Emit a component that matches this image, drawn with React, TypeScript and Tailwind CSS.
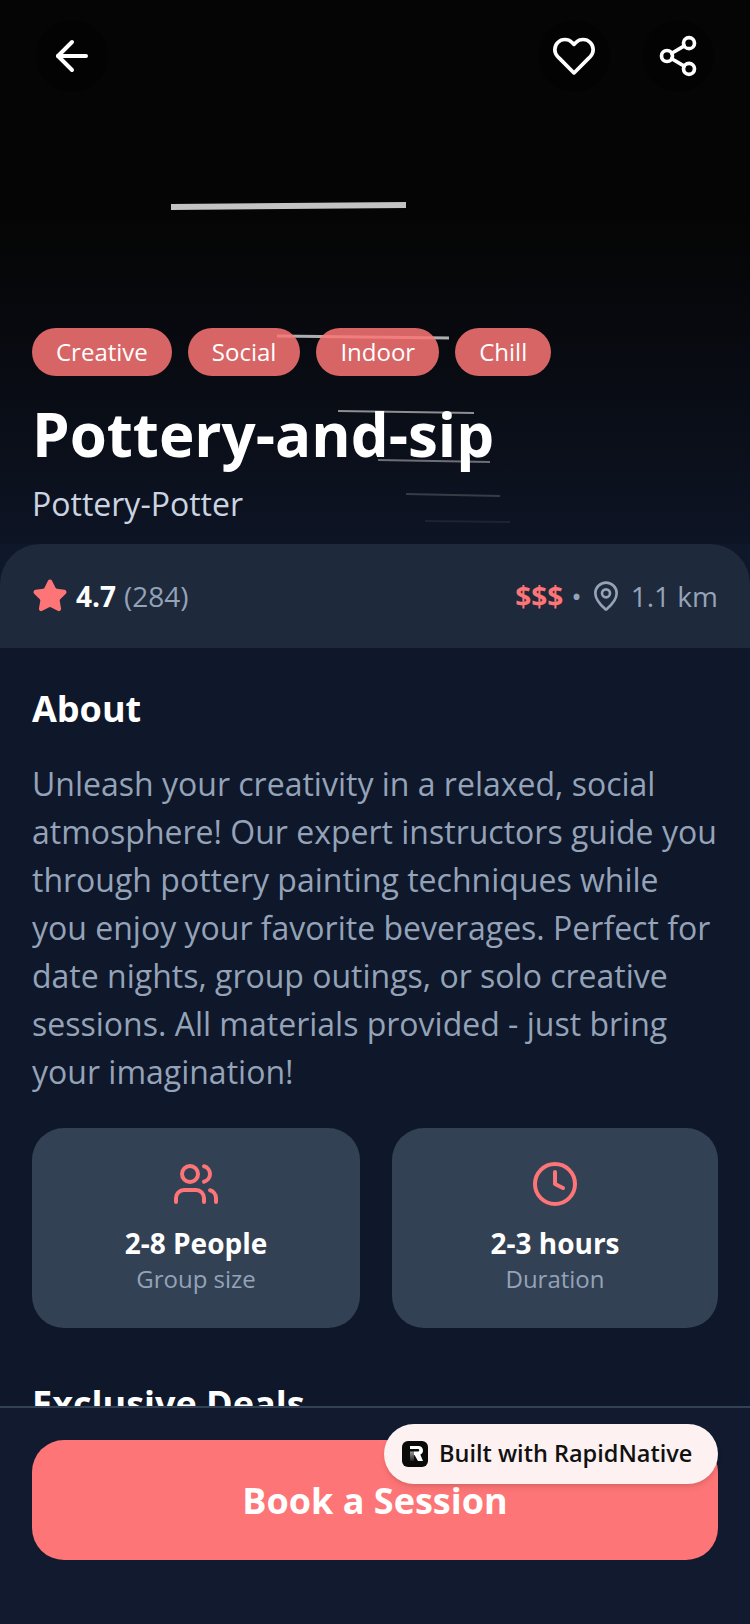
import { ArrowLeft, Clock, MapPin, Share2, Star, Users } from "lucide-react";

const tags = ["Creative", "Social", "Indoor", "Chill"];

const streaks = [
  { x1: 171, y1: 207, x2: 406, y2: 205, w: 6, o: 0.85 },
  { x1: 277, y1: 336, x2: 449, y2: 338, w: 3, o: 0.75 },
  { x1: 338, y1: 411, x2: 474, y2: 413, w: 2, o: 0.6 },
  { x1: 378, y1: 460, x2: 490, y2: 462, w: 2, o: 0.45 },
  { x1: 406, y1: 494, x2: 500, y2: 496, w: 2, o: 0.2 },
  { x1: 425, y1: 521, x2: 510, y2: 522, w: 2, o: 0.08 },
];

const RoundButton = ({ children }: { children: React.ReactNode }) => (
  <button className="flex h-[72px] w-[72px] items-center justify-center rounded-full bg-black/30 text-white">
    {children}
  </button>
);

const InfoCard = ({ icon, title, sub, className }: { icon: React.ReactNode; title: string; sub: string; className: string }) => (
  <div className={`flex h-[200px] flex-col items-center rounded-[32px] bg-[#334155] pt-8 ${className}`}>
    {icon}
    <p className="mt-[17px] text-[28px] leading-[36px] font-bold text-white">{title}</p>
    <p className="text-[24px] leading-[36px] text-[#94a3b8]">{sub}</p>
  </div>
);

export default function App() {
  return (
    <div className="flex h-[1624px] w-[750px] flex-col overflow-hidden bg-[#0f172a] font-['Open_Sans',sans-serif]">
      <div className="flex-1 overflow-hidden">
        <section className="relative flex h-[544px] flex-col bg-gradient-to-b from-[#050505] from-40% to-[#0d1424]">
          {/* streaks from the hero photo */}
          <svg className="absolute inset-0" width="750" height="544" viewBox="0 0 750 544" fill="none">
            {streaks.map((s) => (
              <line key={s.x1} x1={s.x1} y1={s.y1} x2={s.x2} y2={s.y2} stroke="#e5e5e5" strokeWidth={s.w} strokeOpacity={s.o} />
            ))}
          </svg>

          <div className="relative flex items-center justify-between px-9 pt-5">
            <RoundButton><ArrowLeft size={48} strokeWidth={2} /></RoundButton>
            <div className="flex gap-8">
              <RoundButton>
                <svg width="44" height="44" viewBox="0 0 24 24" fill="none" stroke="currentColor" strokeWidth="2" strokeLinecap="round" strokeLinejoin="round">
                  <path d="M20.84 4.61a5.5 5.5 0 0 0-7.78 0L12 5.67l-1.06-1.06a5.5 5.5 0 0 0-7.78 7.78l1.06 1.06L12 21.23l7.78-7.78 1.06-1.06a5.5 5.5 0 0 0 0-7.78z" />
                </svg>
              </RoundButton>
              <RoundButton><Share2 size={44} strokeWidth={2} /></RoundButton>
            </div>
          </div>

          <div className="relative mt-[236px] flex gap-4 px-8">
            {tags.map((tag) => (
              <span key={tag} className="flex h-12 items-center rounded-full bg-[#fd7576]/85 px-6 text-[24px] text-white">
                {tag}
              </span>
            ))}
          </div>
          <h1 className="relative mt-[24px] px-8 text-[60px] leading-[68px] font-bold text-white">Pottery-and-sip</h1>
          <p className="relative mt-[14px] px-8 text-[32px] leading-[44px] text-[#cbd5e1]">Pottery-Potter</p>
        </section>

        <section className="flex h-[104px] items-center justify-between rounded-t-[40px] bg-[#1e293b] px-8">
          <div className="flex items-center">
            <Star size={36} className="fill-[#fd7576] text-[#fd7576]" />
            <span className="ml-2 text-[28px] font-bold text-white">4.7</span>
            <span className="ml-2 text-[28px] text-[#94a3b8]">(284)</span>
          </div>
          <div className="flex items-center">
            <span className="text-[28px] font-bold text-[#fd7576]">$$$</span>
            <span className="mx-2 text-[28px] text-[#94a3b8]">•</span>
            <MapPin size={32} strokeWidth={2} className="text-[#94a3b8]" />
            <span className="ml-[9px] text-[28px] text-[#94a3b8]">1.1 km</span>
          </div>
        </section>

        <section className="px-8 pt-[33px]">
          <h2 className="text-[36px] leading-[56px] font-bold text-white">About</h2>
          <p className="mt-[23px] text-[32px] leading-[48px] text-[#94a3b8]">
            Unleash your creativity in a relaxed, social atmosphere! Our expert instructors guide you through pottery painting techniques while you enjoy your favorite beverages. Perfect for date nights, group outings, or solo creative sessions. All materials provided - just bring your imagination!
          </p>
          <div className="mt-[32px] flex gap-8">
            <InfoCard className="w-[328px]" icon={<Users size={48} className="text-[#fd7576]" />} title="2-8 People" sub="Group size" />
            <InfoCard className="flex-1" icon={<Clock size={48} className="text-[#fd7576]" />} title="2-3 hours" sub="Duration" />
          </div>
          <h2 className="mt-[48px] text-[36px] leading-[56px] font-bold text-white">Exclusive Deals</h2>
        </section>
      </div>

      <footer className="relative h-[218px] shrink-0 border-t-2 border-[#334155] bg-[#111a2e] px-8 pt-8">
        <button className="flex h-[120px] w-full items-center justify-center rounded-[32px] bg-[#fd7576] pt-[2px] text-[36px] font-bold text-white">
          Book a Session
        </button>
        <div className="absolute top-4 right-8 flex h-[60px] w-[334px] items-center gap-[11px] rounded-full bg-[#fdf1f1] pl-[18px] shadow-md">
          <svg width="26" height="26" viewBox="0 0 26 26">
            <defs>
              <linearGradient id="stem" x1="0" y1="0" x2="0" y2="1">
                <stop offset="0" stopColor="#999" />
                <stop offset="1" stopColor="#222" />
              </linearGradient>
            </defs>
            <rect width="26" height="26" rx="6" fill="#0a0a0a" />
            <path d="M8 10.5h4V20H8z" fill="url(#stem)" />
            <path d="M8 5h8.5a4.5 4.5 0 0 1 1.8 8.6L21 20h-5l-3.5-6H12v-3.5h4a1 1 0 0 0 0-2.5H8z" fill="#fff" />
          </svg>
          <span className="text-[23.5px] font-semibold text-[#111]">Built with RapidNative</span>
        </div>
      </footer>
    </div>
  );
}
